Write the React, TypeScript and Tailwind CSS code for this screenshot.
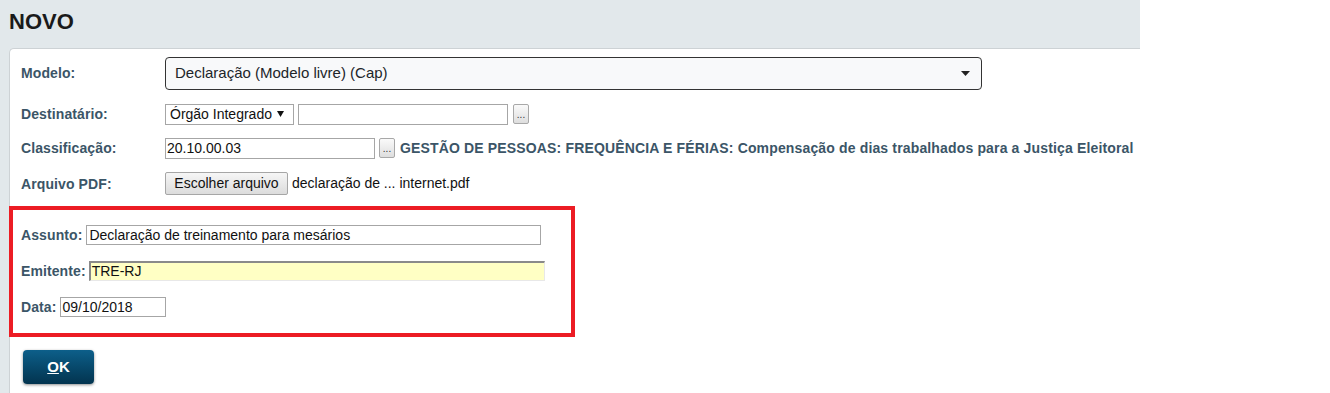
import React from "react";

const F = { fontFamily: '"Liberation Sans", Arial, sans-serif' };

function Label({ children, w }: { children: React.ReactNode; w?: string }) {
  return (
    <span className={`text-[14px] font-bold text-[#3b5567] tracking-[0.1px] ${w ?? ""}`}>{children}</span>
  );
}

function DotsBtn() {
  return (
    <div className="w-[16px] h-[20px] border border-[#a8a8a8] rounded-[2px] bg-gradient-to-b from-[#fafafa] to-[#dedede] flex items-end justify-center pb-[3px]">
      <span className="text-[10px] leading-none text-[#333]">...</span>
    </div>
  );
}

export default function App() {
  return (
    <div className="w-[1330px] h-[393px] bg-white flex overflow-hidden" style={F}>
      <div className="w-[1140px] h-full bg-[#e2e8eb] flex flex-col">
        <div className="h-[48px] pl-[9px] pt-[9px]">
          <h1 className="text-[22px] leading-[26px] font-bold text-[#1a1a1a]">NOVO</h1>
        </div>
        <div className="ml-[9px] flex-1 bg-white border-t border-l border-[#cdd2d5] rounded-tl-[5px] flex flex-col">
          <div className="pl-[11px] pt-[8px] flex items-center h-[40px]">
            <div className="w-[144px]"><Label>Modelo:</Label></div>
            <div className="w-[817px] h-[33px] border border-[#333] rounded-[4px] bg-[#f8f9fa] flex items-center pl-[9px] pr-[11px] justify-between">
              <span className="text-[15px] text-[#212529]">Declaração (Modelo livre) (Cap)</span>
              <svg width="9" height="5" viewBox="0 0 9 5"><path d="M0 0h9L4.5 5z" fill="#222" /></svg>
            </div>
          </div>
          <div className="pl-[11px] mt-[15px] flex items-center h-[20px]">
            <div className="w-[144px]"><Label>Destinatário:</Label></div>
            <div className="w-[129px] h-[21px] border border-[#a6a6a6] bg-white flex items-center pl-[4px] gap-[5px]">
              <span className="text-[14px] text-[#111]">Órgão Integrado</span>
              <svg width="7" height="6" viewBox="0 0 7 6"><path d="M0 0h7L3.5 6z" fill="#111" /></svg>
            </div>
            <div className="ml-[4px] w-[210px] h-[21px] border border-[#a6a6a6] bg-white" />
            <div className="ml-[5px]"><DotsBtn /></div>
          </div>
          <div className="pl-[11px] mt-[14px] flex items-center h-[20px]">
            <div className="w-[144px]"><Label>Classificação:</Label></div>
            <div className="w-[210px] h-[21px] border border-[#a6a6a6] bg-white flex items-center pl-[1px]">
              <span className="text-[14px] text-[#111]">20.10.00.03</span>
            </div>
            <div className="ml-[4px]"><DotsBtn /></div>
            <span className="ml-[5px] text-[14px] font-bold text-[#3b5567] whitespace-nowrap tracking-[0.15px]">
              GESTÃO DE PESSOAS: FREQUÊNCIA E FÉRIAS: Compensação de dias trabalhados para a Justiça Eleitoral
            </span>
          </div>
          <div className="pl-[11px] mt-[14px] flex items-center h-[23px]">
            <div className="w-[144px]"><Label>Arquivo PDF:</Label></div>
            <div className="w-[123px] h-[23px] border border-[#a6a6a6] rounded-[2px] bg-gradient-to-b from-[#f6f6f6] to-[#dcdcdc] flex items-center justify-center">
              <span className="text-[14px] text-[#111]">Escolher arquivo</span>
            </div>
            <span className="ml-[4px] text-[14px] text-[#111]">declaração de ... internet.pdf</span>
          </div>
          <div className="-ml-[1px] mt-[11px] w-[566px] h-[131px] border-[4px] border-[#ec1c24] pl-[8px] pt-[15px] flex flex-col">
            <div className="flex items-center h-[20px]">
              <Label>Assunto:</Label>
              <div className="ml-[4px] w-[455px] h-[20px] border border-[#a6a6a6] bg-white flex items-center pl-[2px]">
                <span className="text-[14px] text-[#111]">Declaração de treinamento para mesários</span>
              </div>
            </div>
            <div className="mt-[16px] flex items-center h-[20px]">
              <Label>Emitente:</Label>
              <div className="ml-[3px] w-[456px] h-[20px] border-t-2 border-l-2 border-b border-r border-t-[#8a8a8a] border-l-[#8a8a8a] border-b-[#e8e8e8] border-r-[#e8e8e8] bg-[#ffffc4] flex items-center pl-[1px]">
                <span className="text-[14px] text-[#111]">TRE-RJ</span>
              </div>
            </div>
            <div className="mt-[16px] flex items-center h-[20px]">
              <Label>Data:</Label>
              <div className="ml-[3px] w-[106px] h-[20px] border border-[#a6a6a6] bg-white flex items-center pl-[2px]">
                <span className="text-[14px] text-[#111]">09/10/2018</span>
              </div>
            </div>
          </div>
          <div className="pl-[13px] mt-[13px]">
            <div className="w-[71px] h-[34px] rounded-[4px] bg-gradient-to-b from-[#0d5f8a] to-[#03344f] shadow-[0_1px_3px_rgba(0,0,0,0.45)] flex items-center justify-center">
              <span className="text-[15px] font-bold text-white"><span className="underline">O</span>K</span>
            </div>
          </div>
        </div>
      </div>
    </div>
  );
}
